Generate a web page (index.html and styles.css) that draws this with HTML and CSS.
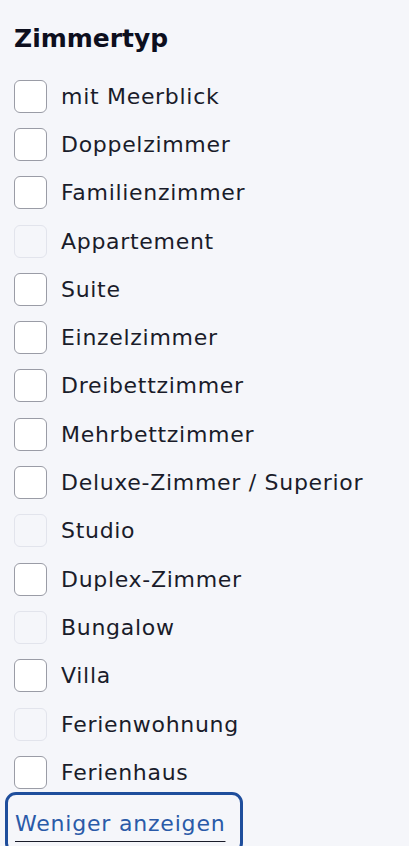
FILE: index.html
```html
<!DOCTYPE html>
<html lang="de">
<head>
    <meta charset="UTF-8">
    <meta name="viewport" content="width=device-width, initial-scale=1.0">
    <title>Zimmertyp</title>
    <link rel="stylesheet" href="styles.css">
</head>
<body>
    <div class="filter">
        <h2>Zimmertyp</h2>

        <ul class="options">
            <li><span class="box"></span>mit Meerblick</li>
            <li><span class="box"></span>Doppelzimmer</li>
            <li><span class="box"></span>Familienzimmer</li>
            <li class="disabled"><span class="box"></span>Appartement</li>
            <li><span class="box"></span>Suite</li>
            <li><span class="box"></span>Einzelzimmer</li>
            <li><span class="box"></span>Dreibettzimmer</li>
            <li><span class="box"></span>Mehrbettzimmer</li>
            <li><span class="box"></span>Deluxe-Zimmer / Superior</li>
            <li class="disabled"><span class="box"></span>Studio</li>
            <li><span class="box"></span>Duplex-Zimmer</li>
            <li class="disabled"><span class="box"></span>Bungalow</li>
            <li><span class="box"></span>Villa</li>
            <li class="disabled"><span class="box"></span>Ferienwohnung</li>
            <li><span class="box"></span>Ferienhaus</li>
        </ul>

        <button class="more">Weniger anzeigen</button>
    </div>
</body>
</html>
```

FILE: styles.css
```css
body {
    margin: 0;
    background-color: #f5f6fa;
    font-family: 'DejaVu Sans', sans-serif;
    color: #1a1c2a;
}

.filter {
    padding: 24px 0 0 14px;
}

h2 {
    font-size: 25px;
    font-weight: bold;
    margin: 0 0 18px 0;
    line-height: 30px;
    color: #0d0f1e;
}

.options {
    list-style: none;
    margin: 0;
    padding: 0;
}

.options li {
    display: flex;
    align-items: center;
    height: 48.3px;
    font-size: 22px;
    letter-spacing: 0.7px;
}

.box {
    width: 31px;
    height: 31px;
    border: 1px solid #9a9ca6;
    border-radius: 6px;
    background: #fff;
    margin-right: 14px;
    flex-shrink: 0;
}

.disabled .box {
    border-color: #e2e4ec;
    background: transparent;
}

.more {
    margin: -4px 0 0 -9px;
    padding: 16px 15px 14px 7px;
    border: 3px solid #1f4e9c;
    border-radius: 11px;
    background: none;
    font-family: inherit;
    font-size: 22px;
    letter-spacing: 0.8px;
    line-height: 26px;
    color: #2a5aa8;
    text-decoration: underline;
    text-underline-offset: 10px;
    text-decoration-thickness: 1px;
    text-decoration-color: #1a1c2a;
}
```
